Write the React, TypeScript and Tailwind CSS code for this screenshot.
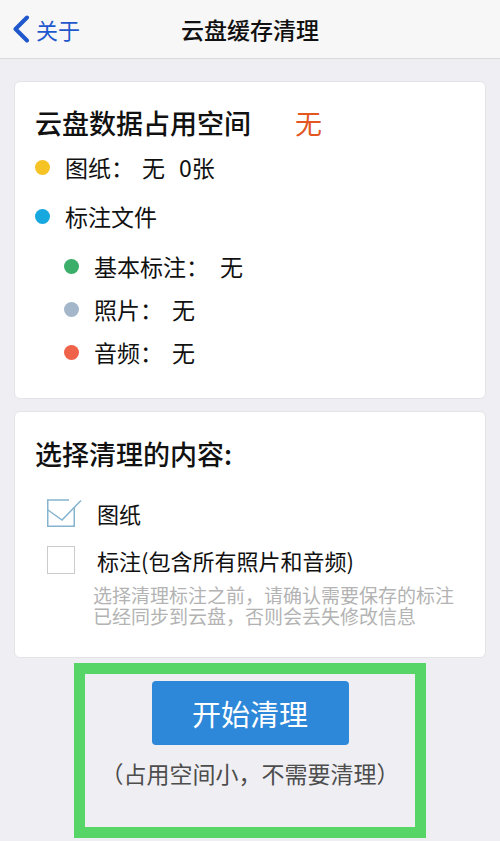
import type { ReactNode } from "react";

const FONT = "font-['Noto_Sans_CJK_SC','Noto_Sans',sans-serif]";

function Dot({ color }: { color: string }) {
  return <span className={`inline-block h-[15px] w-[15px] shrink-0 rounded-full ${color}`} />;
}

function Row({ dot, children, className = "" }: { dot: string; children: ReactNode; className?: string }) {
  return (
    <div className={`flex items-center ${className}`}>
      <Dot color={dot} />
      <div className="ml-[15px] flex items-center">{children}</div>
    </div>
  );
}

function CheckedBox() {
  return (
    <svg width="36" height="30" viewBox="0 0 36 30" className="shrink-0">
      <path d="M22 2H0.75V28.25H27.25V9" fill="none" stroke="#86b4cf" strokeWidth="1.5" />
      <path d="M1 12L15 22L34 2.5" fill="none" stroke="#86b4cf" strokeWidth="1.5" />
    </svg>
  );
}

export default function App() {
  return (
    <div className={`flex h-[841px] w-[500px] flex-col overflow-hidden bg-[#efeff3] ${FONT}`}>
      {/* Nav bar */}
      <header className="relative flex h-[59px] shrink-0 items-center border-b border-[#d9d9d9] bg-[#f7f7f7]">
        <div className="flex items-center pl-[12px] text-[#1f58cc]">
          <svg width="18" height="28" viewBox="0 0 18 28">
            <path d="M15 2.5L3.5 14L15 25.5" fill="none" stroke="#1f58cc" strokeWidth="4" strokeLinecap="round" strokeLinejoin="round" />
          </svg>
          <span className="ml-[6px] text-[22px] leading-none">关于</span>
        </div>
        <h1 className="absolute left-0 right-0 text-center text-[23px] font-medium leading-none text-[#111]">
          云盘缓存清理
        </h1>
      </header>

      <main className="flex flex-col px-[14px]">
        {/* Space card */}
        <section className="mt-[22px] h-[318px] rounded-[6px] border border-[#e4e4e8] bg-white pl-[20px] pt-[18px] text-[#111]">
          <div className="flex h-[44px] items-center text-[27px] font-medium leading-none">
            <span>云盘数据占用空间</span>
            <span className="ml-[44px] font-normal text-[#e3561f]">无</span>
          </div>
          <Row dot="bg-[#f6c325]" className="mt-[1px] h-[44px] text-[23px] leading-none">
            <span>图纸：</span>
            <span className="ml-[8px]">无</span>
            <span className="ml-[14px]">0张</span>
          </Row>
          <Row dot="bg-[#17a8e0]" className="mt-[5px] h-[44px] text-[23px] leading-none">
            <span>标注文件</span>
          </Row>
          <div className="mt-[7px] pl-[29px] text-[23px] leading-none">
            <Row dot="bg-[#3bae6a]" className="h-[43px]">
              <span>基本标注：</span>
              <span className="ml-[11px]">无</span>
            </Row>
            <Row dot="bg-[#a4b6c9]" className="h-[43px]">
              <span>照片：</span>
              <span className="ml-[9px]">无</span>
            </Row>
            <Row dot="bg-[#f0634b]" className="h-[43px]">
              <span>音频：</span>
              <span className="ml-[9px]">无</span>
            </Row>
          </div>
        </section>

        {/* Choose card */}
        <section className="mt-[12px] h-[247px] rounded-[6px] border border-[#e4e4e8] bg-white pl-[20px] pt-[19px] text-[#111]">
          <div className="flex h-[44px] items-center text-[27px] font-medium leading-none">选择清理的内容:</div>
          <div className="mt-[20px] flex h-[36px] items-center pl-[12px] text-[22px] leading-none">
            <CheckedBox />
            <span className="ml-[14px]">图纸</span>
          </div>
          <div className="mt-[11px] flex h-[36px] items-center pl-[12px] text-[22px] leading-none">
            <span className="inline-block h-[28px] w-[28px] shrink-0 border-[1.5px] border-[#cbcbcb]" />
            <span className="ml-[22px]">标注(包含所有照片和音频)</span>
          </div>
          <div className="mt-[6px] pl-[58px] text-[19px] leading-[21px] text-[#b3b3b3]">
            <div>选择清理标注之前，请确认需要保存的标注</div>
            <div>已经同步到云盘，否则会丢失修改信息</div>
          </div>
        </section>

        {/* Action */}
        <div className="mx-auto mt-[5px] flex h-[175px] w-[352px] flex-col items-center border-[11px] border-[#57d667]">
          <button className="mt-[7px] flex h-[64px] w-[197px] items-center justify-center rounded-[4px] bg-[#2d88d9] text-[29px] leading-none text-white">
            开始清理
          </button>
          <p className="mt-[13px] text-[23px] leading-[30px] text-[#4d4d4d]">（占用空间小，不需要清理）</p>
        </div>
      </main>
    </div>
  );
}
